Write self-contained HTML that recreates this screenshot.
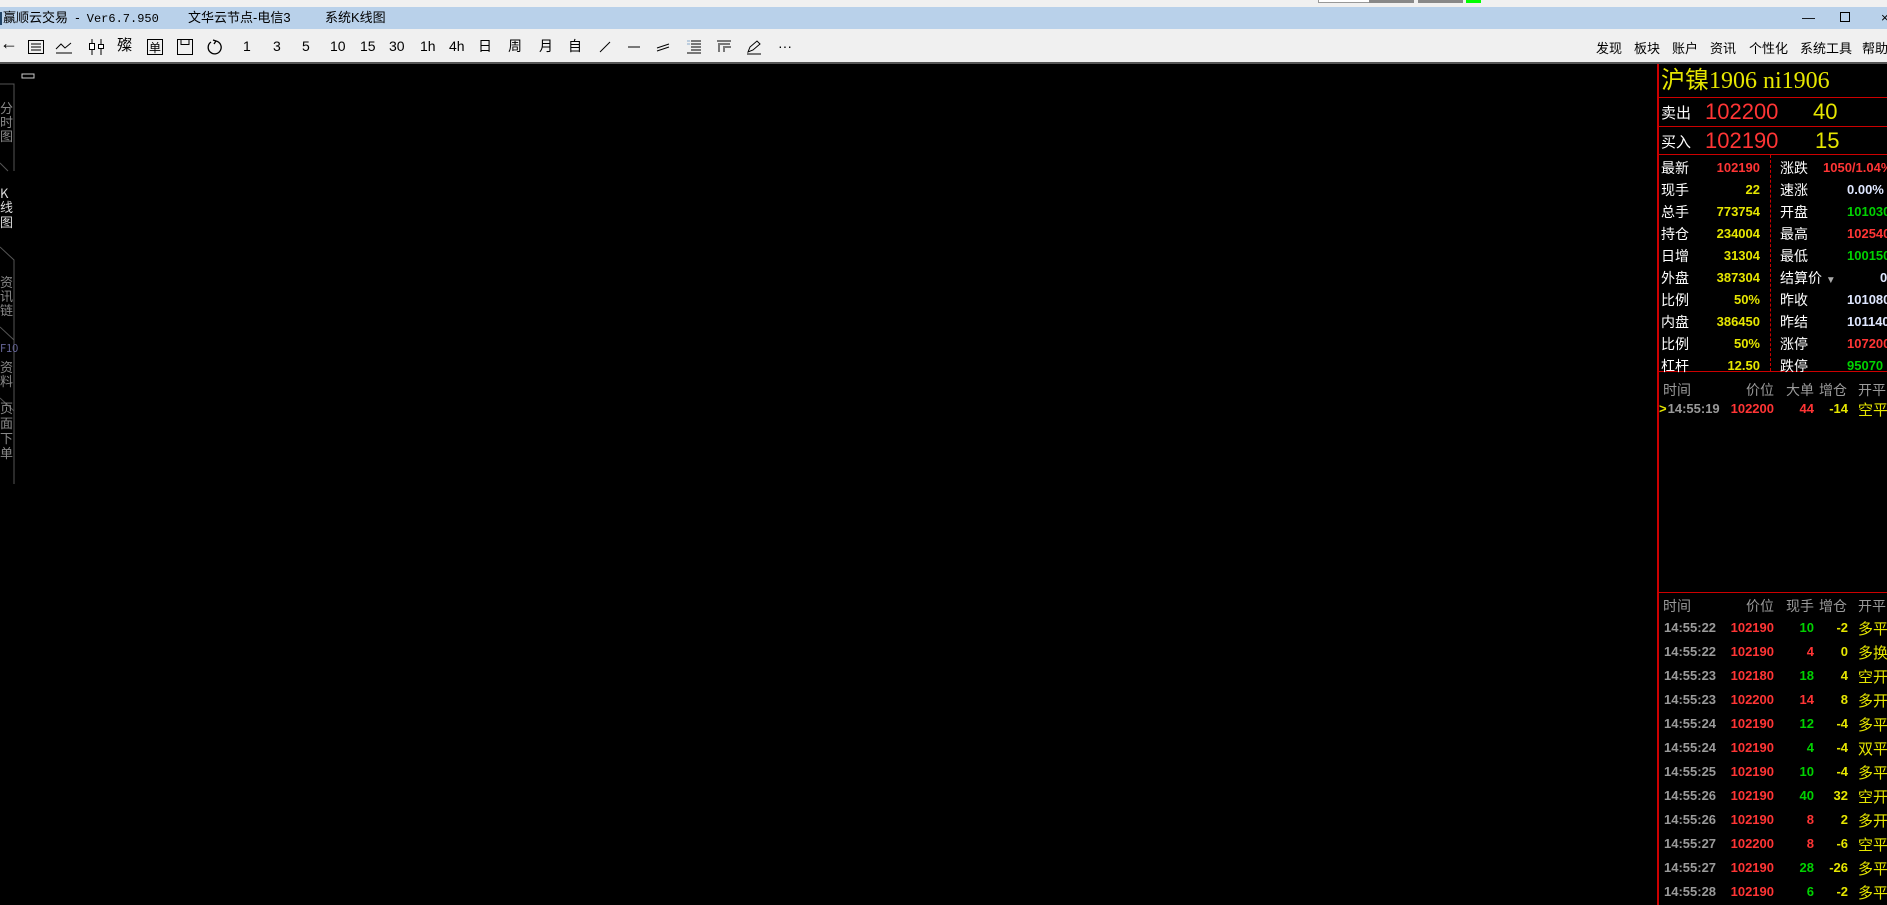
<!DOCTYPE html>
<html><head><meta charset="utf-8"><style>
*{margin:0;padding:0;box-sizing:border-box}
body{width:1887px;height:905px;overflow:hidden;background:#000;font-family:"Liberation Sans","Noto Sans CJK SC",sans-serif;position:relative}
.a{position:absolute;white-space:nowrap}
#top{left:0;top:0;width:1887px;height:7px;background:#f0f0f0}
#title{left:0;top:7px;width:1887px;height:22px;background:#b9d1ea;font-size:13px;color:#000;line-height:22px}
#tb{left:0;top:29px;width:1887px;height:33px;background:#f0f0f0;font-size:14px;color:#000}
#tbl{left:0;top:62px;width:1887px;height:2px;background:#555}
.tbi{position:absolute;top:9px;line-height:16px}
.m{position:absolute;top:9px;font-size:13px}
.r{color:#ff3535}.y{color:#e6e600}.g{color:#00d200}.w{color:#fff}.gr{color:#9a9a9a}.lb{color:#dfe7ff}
.f{font-weight:bold;font-size:13px}
</style></head><body>
<div class="a" id="top">
<div class="a" style="left:1318px;top:0;width:55px;height:3px;border:1px solid #999;border-top:none;background:#fff"></div>
<div class="a" style="left:1369px;top:0;width:45px;height:3px;background:#888"></div>
<div class="a" style="left:1418px;top:0;width:45px;height:3px;background:#888"></div>
<div class="a" style="left:1466px;top:0;width:15px;height:3px;background:#0f0"></div>
</div>
<div class="a" id="title">
<span class="a" style="left:0;top:5px;width:2px;height:13px;background:#246"></span>
<span class="a" style="left:3px">赢顺云交易 &nbsp;- &nbsp;<span style="font-family:'Liberation Mono';font-size:12px">Ver6.7.950</span></span>
<span class="a" style="left:188px">文华云节点-电信3</span>
<span class="a" style="left:325px">系统K线图</span>
<span class="a" style="left:1802px;top:0">—</span>
<span class="a" style="left:1840px;top:5px;width:10px;height:10px;border:1px solid #000"></span>
<span class="a" style="left:1881px">×</span>
</div>
<div class="a" id="tb">
<span class="tbi" style="left:0;font-size:18px;top:6px">←</span>
<svg class="a" style="left:28px;top:11px" width="16" height="14"><rect x=".5" y=".5" width="15" height="13" fill="none" stroke="#000"/><path d="M3 4h10M3 7h10M3 10h10" stroke="#000"/></svg>
<svg class="a" style="left:55px;top:11px" width="17" height="14"><path d="M1 9l5-5 4 4 6-5M1 13h16" stroke="#000" fill="none"/></svg>
<svg class="a" style="left:88px;top:9px" width="17" height="18"><path d="M4 1v16M13 1v16" stroke="#000"/><rect x="1.5" y="5.5" width="5" height="6" fill="#fff" stroke="#000"/><rect x="10.5" y="6.5" width="5" height="4" fill="#fff" stroke="#000"/></svg>
<span class="tbi" style="left:117px;font-size:15px">殩</span>
<svg class="a" style="left:147px;top:10px" width="16" height="16"><rect x=".5" y=".5" width="15" height="15" fill="none" stroke="#000"/><text x="2" y="13" font-size="12" font-family="Noto Sans CJK SC">单</text></svg>
<svg class="a" style="left:177px;top:10px" width="16" height="16"><path d="M.5 .5h15v15H.5zM4 .5v5h8v-5" fill="none" stroke="#000"/></svg>
<svg class="a" style="left:207px;top:10px" width="16" height="16"><path d="M9 2A6.5 6.5 0 1 1 4 3M6 1l3 1-2 3" fill="none" stroke="#000" stroke-width="1.3"/></svg>
<span class="tbi" style="left:243px">1</span><span class="tbi" style="left:273px">3</span><span class="tbi" style="left:302px">5</span><span class="tbi" style="left:330px">10</span><span class="tbi" style="left:360px">15</span><span class="tbi" style="left:389px">30</span><span class="tbi" style="left:420px">1h</span><span class="tbi" style="left:449px">4h</span><span class="tbi" style="left:478px">日</span><span class="tbi" style="left:508px">周</span><span class="tbi" style="left:539px">月</span><span class="tbi" style="left:568px">自</span>
<svg class="a" style="left:598px;top:12px" width="14" height="12"><path d="M2 11L12 1" stroke="#000"/></svg>
<svg class="a" style="left:627px;top:12px" width="14" height="12"><path d="M1 6h12" stroke="#000"/></svg>
<svg class="a" style="left:656px;top:12px" width="14" height="12"><path d="M1 7l12-4M1 10l12-4" stroke="#000"/></svg>
<svg class="a" style="left:686px;top:10px" width="16" height="16"><path d="M5 2h10M5 5h10M5 8h10M5 11h10M1 14h14" stroke="#000"/><path d="M1 2h3M1 5h3" stroke="#8ac"/></svg>
<svg class="a" style="left:716px;top:10px" width="16" height="16"><path d="M1 2h14M4 5h10M7 8h8M3 4v9M8 9v4" stroke="#000" fill="none"/></svg>
<svg class="a" style="left:746px;top:10px" width="16" height="16"><path d="M2 13l2-5 7-6 3 3-7 6zM1 15h14" stroke="#000" fill="none"/></svg>
<span class="tbi" style="left:778px">···</span>
<span class="m" style="left:1596px">发现</span><span class="m" style="left:1634px">板块</span><span class="m" style="left:1672px">账户</span><span class="m" style="left:1710px">资讯</span><span class="m" style="left:1749px">个性化</span><span class="m" style="left:1800px">系统工具</span><span class="m" style="left:1862px">帮助</span>
</div>
<div class="a" id="tbl"></div>
<!-- left sidebar -->
<svg class="a" style="left:0;top:64px" width="40" height="420" font-family="Noto Sans CJK SC" font-size="13">
<path d="M22 10h12v4H22z" fill="none" stroke="#ccc"/>
<path d="M0 20H14V107M0 99L8 107" fill="none" stroke="#555"/>
<text x="0" y="49" fill="#888">分</text><text x="0" y="63" fill="#888">时</text><text x="0" y="77" fill="#888">图</text>
<text x="0" y="134" fill="#ddd">K</text><text x="0" y="148" fill="#ddd">线</text><text x="0" y="163" fill="#ddd">图</text>
<path d="M0 183L14 196V420M0 263L14 276M0 334L14 347" fill="none" stroke="#555"/>
<text x="0" y="223" fill="#888">资</text><text x="0" y="237" fill="#888">讯</text><text x="0" y="251" fill="#888">链</text>
<text x="0" y="288" fill="#669" font-size="11">F10</text><text x="0" y="308" fill="#888">资</text><text x="0" y="322" fill="#888">料</text>
<text x="0" y="349" fill="#888">页</text><text x="0" y="364" fill="#888">面</text><text x="0" y="379" fill="#888">下</text><text x="0" y="394" fill="#888">单</text>
</svg>
<!-- right panel -->
<div class="a" style="left:1657px;top:64px;width:2px;height:841px;background:#c00"></div>
<div class="a" style="left:1658px;top:97px;width:229px;height:1px;background:#c00"></div>
<div class="a" style="left:1658px;top:126px;width:229px;height:1px;background:#c00"></div>
<div class="a" style="left:1658px;top:154px;width:229px;height:1px;background:#c00"></div>
<div class="a" style="left:1658px;top:371px;width:229px;height:1px;background:#c00"></div>
<div class="a" style="left:1658px;top:592px;width:229px;height:1px;background:#c00"></div>
<div class="a" style="left:1770px;top:155px;width:0;height:216px;border-left:1px dashed #c00"></div>
<div class="a y" style="left:1661px;top:67px;font-size:24px;font-family:'Liberation Serif','Noto Sans CJK SC',serif;line-height:28px">沪镍1906 ni1906</div>
<div class="a w" style="left:1661px;top:102px;font-size:15px">卖出</div>
<div class="a r" style="left:1705px;top:99px;font-size:22px">102200</div>
<div class="a y" style="left:1813px;top:99px;font-size:22px">40</div>
<div class="a w" style="left:1661px;top:131px;font-size:15px">买入</div>
<div class="a r" style="left:1705px;top:128px;font-size:22px">102190</div>
<div class="a y" style="left:1815px;top:128px;font-size:22px">15</div>
<div id="info"></div>
<script>
var L=[["最新","102190","r","涨跌","1050/1.04%","r"],["现手","22","y","速涨","0.00%","lb"],["总手","773754","y","开盘","101030","g"],["持仓","234004","y","最高","102540","r"],["日增","31304","y","最低","100150","g"],["外盘","387304","y","结算价","0","lb"],["比例","50%","y","昨收","101080","lb"],["内盘","386450","y","昨结","101140","lb"],["比例","50%","y","涨停","107200","r"],["杠杆","12.50","y","跌停","95070","g"]];
var h="";
L.forEach(function(r,i){var y=158+i*22;
h+='<div class="a w" style="left:1661px;top:'+y+'px;font-size:14px">'+r[0]+'</div>';
h+='<div class="a f '+r[2]+'" style="right:127px;top:'+(y+2)+'px">'+r[1]+'</div>';
h+='<div class="a w" style="left:1780px;top:'+y+'px;font-size:14px">'+r[3]+(i==5?' <span style="color:#aaa;font-size:10px">▼</span>':'')+'</div>';
h+='<div class="a f '+r[5]+'" style="left:'+(i==5?1880:(i==0?1823:1847))+'px;top:'+(y+2)+'px">'+r[4]+'</div>';});
function hdr(y,c){return '<div class="a gr" style="left:1663px;top:'+y+'px;font-size:14px">时间</div><div class="a gr" style="right:113px;top:'+y+'px;font-size:14px">价位</div><div class="a gr" style="right:73px;top:'+y+'px;font-size:14px">'+c+'</div><div class="a gr" style="right:40px;top:'+y+'px;font-size:14px">增仓</div><div class="a gr" style="left:1858px;top:'+y+'px;font-size:14px">开平</div>';}
function row(y,t,p,n,nc,z,k){return '<div class="a f gr" style="left:1664px;top:'+y+'px">'+t+'</div><div class="a f r" style="right:113px;top:'+y+'px">'+p+'</div><div class="a f '+nc+'" style="right:73px;top:'+y+'px">'+n+'</div><div class="a f y" style="right:39px;top:'+y+'px">'+z+'</div><div class="a y" style="left:1858px;top:'+(y-2)+'px;font-size:15px">'+k+'</div>';}
h+=hdr(380,"大单");
h+='<div class="a y f" style="left:1659px;top:401px">&gt;</div>'+row(401,"&nbsp;14:55:19","102200","44","r","-14","空平");
h+=hdr(596,"现手");
var R=[["14:55:22","102190","10","g","-2","多平"],["14:55:22","102190","4","r","0","多换"],["14:55:23","102180","18","g","4","空开"],["14:55:23","102200","14","r","8","多开"],["14:55:24","102190","12","g","-4","多平"],["14:55:24","102190","4","g","-4","双平"],["14:55:25","102190","10","g","-4","多平"],["14:55:26","102190","40","g","32","空开"],["14:55:26","102190","8","r","2","多开"],["14:55:27","102200","8","r","-6","空平"],["14:55:27","102190","28","g","-26","多平"],["14:55:28","102190","6","g","-2","多平"]];
R.forEach(function(r,i){h+=row(620+i*24,r[0],r[1],r[2],r[3],r[4],r[5]);});
document.getElementById("info").innerHTML=h;
</script>
</body></html>
